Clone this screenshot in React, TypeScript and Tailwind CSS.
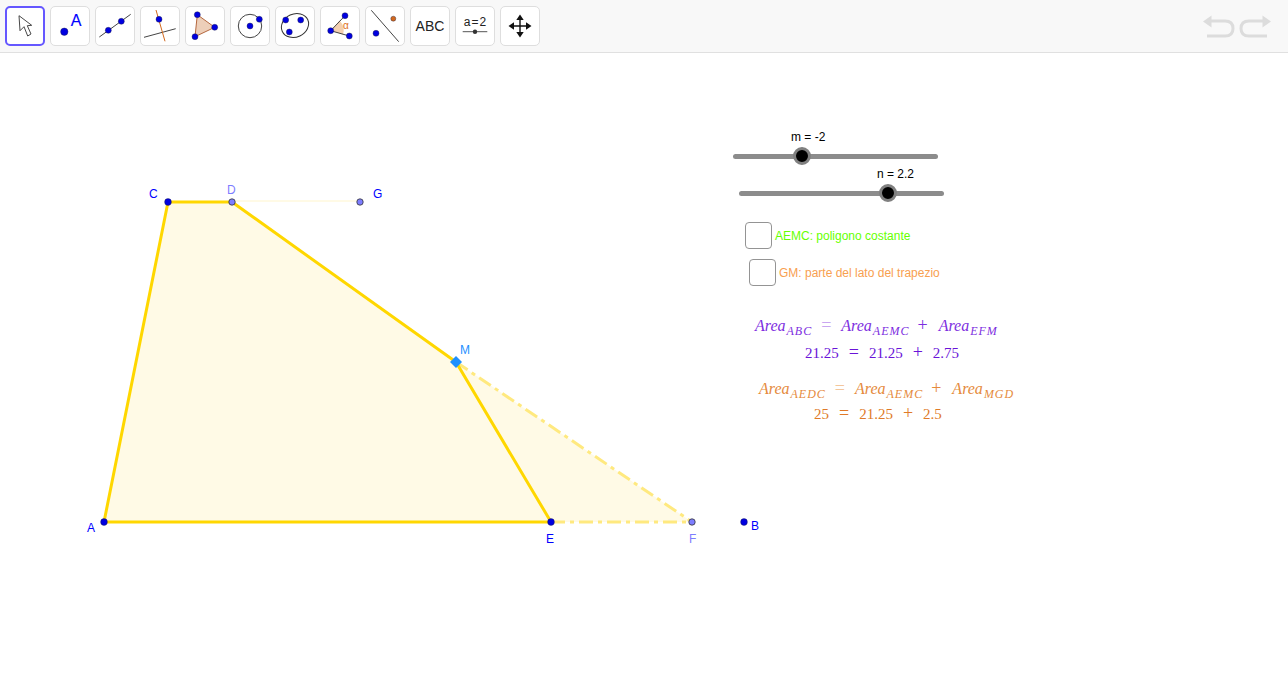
import type { ReactNode } from 'react';

const BLUE = '#0000e0';

function Dot({ x, y, r = 3, fill = BLUE }: { x: number; y: number; r?: number; fill?: string }) {
  return <circle cx={x} cy={y} r={r} fill={fill} stroke="#1c1c3c" strokeWidth={0.4} />;
}

function ToolIcon({ children }: { children: ReactNode }) {
  return (
    <svg width="40" height="40" viewBox="0 0 40 40" className="block" aria-hidden="true">
      {children}
    </svg>
  );
}

const TOOLS: ReactNode[] = [
  <path key="move" d="M14 9.7 15 24.7 19 20.7 22.7 30 26 28 22.3 19.7 26.7 19.3Z" fill="#fff" stroke="#333" strokeWidth={0.9} strokeLinejoin="round" />,
  <g key="point">
    <Dot x={14.3} y={25.7} r={3.7} />
    <text x={26} y={19.5} textAnchor="middle" fontSize={16} fill="#0000ff" stroke="#0000ff" strokeWidth={0.15} fontFamily="Liberation Sans, sans-serif">A</text>
  </g>,
  <g key="line">
    <line x1={4.3} y1={31} x2={35.7} y2={8.3} stroke="#444" strokeWidth={1} />
    <Dot x={13.3} y={24.3} />
    <Dot x={26.3} y={15.3} />
  </g>,
  <g key="perp">
    <line x1={4} y1={31.3} x2={35.7} y2={22.7} stroke="#444" strokeWidth={1} />
    <line x1={16} y1={4} x2={25} y2={35.3} stroke="#d2691e" strokeWidth={1} />
    <Dot x={19} y={13.3} />
  </g>,
  <g key="polygon">
    <path d="M12.3 8.7 29.7 21.3 10 30.7Z" fill="#edcfb9" stroke="#b5683f" strokeWidth={1} />
    <Dot x={12.3} y={8.7} />
    <Dot x={29.7} y={21.3} />
    <Dot x={10} y={30.7} />
  </g>,
  <g key="circle">
    <circle cx={20} cy={20} r={11.7} fill="none" stroke="#444" strokeWidth={1} />
    <Dot x={20} y={20} />
    <Dot x={29.3} y={13.3} />
  </g>,
  <g key="conic">
    <ellipse cx={20} cy={19.5} rx={14} ry={11.5} transform="rotate(-25 20 19.5)" fill="none" stroke="#333" strokeWidth={1} />
    <Dot x={10.7} y={14} />
    <Dot x={25.7} y={14} />
    <Dot x={14.3} y={26} />
  </g>,
  <g key="angle">
    <path d="M10.7 24.7 19.5 14.5A14 14 0 0 1 23 28.4Z" fill="#f3cfb0" />
    <path d="M25 9.7 10.7 24.7 29.3 30" fill="none" stroke="#444" strokeWidth={1} />
    <text x={26} y={23} textAnchor="middle" fontSize={10} fill="#e07020" fontFamily="Liberation Sans, sans-serif">α</text>
    <Dot x={10.7} y={24.7} />
    <Dot x={25} y={9.7} />
    <Dot x={29.3} y={30} />
  </g>,
  <g key="reflect">
    <line x1={6.3} y1={4.3} x2={33.7} y2={35.7} stroke="#444" strokeWidth={1} />
    <Dot x={11} y={27.3} />
    <Dot x={28.3} y={12.7} r={2.5} fill="#d2691e" />
  </g>,
  <text key="abc" x={20} y={25} textAnchor="middle" fontSize={14} fill="#222" fontFamily="Liberation Sans, sans-serif">ABC</text>,
  <g key="slider">
    <text x={20.5} y={19.5} textAnchor="middle" fontSize={12} letterSpacing={1} fill="#222" fontFamily="Liberation Sans, sans-serif">a=2</text>
    <line x1={7.7} y1={25.7} x2={32.3} y2={25.7} stroke="#555" strokeWidth={1} />
    <circle cx={20} cy={25.7} r={2.2} fill="#333" />
  </g>,
  <g key="pan">
    <path d="M20 11V29M11 20H29" stroke="#111" strokeWidth={1.4} />
    <path d="M20 8.5 16.3 14H23.7ZM20 31.5 16.3 26H23.7ZM8.5 20 14 16.3V23.7ZM31.5 20 26 16.3V23.7Z" fill="#111" />
  </g>,
];

function Toolbar() {
  return (
    <div className="flex h-[53px] items-start justify-between border-b border-[#e0e0e0] bg-[#f8f8f8] pl-[5px] pr-[16px] pt-[6px]">
      <div className="flex gap-[5px]">
        {TOOLS.map((icon, i) => (
          <div
            key={i}
            className={
              i === 0
                ? 'size-[40px] rounded-[5px] border-2 border-[#6557ff] bg-white [&>svg]:-m-[2px]'
                : 'size-[40px] rounded-[5px] border border-[#dedede] bg-white [&>svg]:-m-px'
            }
          >
            <ToolIcon>{icon}</ToolIcon>
          </div>
        ))}
      </div>
      <div className="flex gap-[2px] pt-[6px]">
        <svg width="34" height="28" viewBox="0 0 34 28" aria-hidden="true">
          <path d="M8 9H23Q31 9 31 16.5T23 24H5" fill="none" stroke="#dcdcdc" strokeWidth={3} />
          <path d="M1 9.5 9.5 3.5V15.5Z" fill="#dcdcdc" />
        </svg>
        <svg width="34" height="28" viewBox="0 0 34 28" aria-hidden="true">
          <path d="M26 9H11Q3 9 3 16.5T11 24H29" fill="none" stroke="#dcdcdc" strokeWidth={3} />
          <path d="M33 9.5 24.5 3.5V15.5Z" fill="#dcdcdc" />
        </svg>
      </div>
    </div>
  );
}

function Figure() {
  return (
    <svg width="1288" height="677" viewBox="0 0 1288 677" className="absolute left-0 top-0" aria-hidden="true">
      <path d="M104 522H551L456 362 232 202H168Z" fill="#fffae6" />
      <path d="M456 362 551 522H692Z" fill="#fffae6" />
      <line x1={232} y1={201} x2={360} y2={201} stroke="#fff5cc" strokeWidth={1} />
      <path d="M551 522H692M456 362 692 522" fill="none" stroke="#ffe97f" strokeWidth={3} strokeDasharray="14 5 4 5" />
      <path d="M456 362 232 202H168L104 522H551Z" fill="none" stroke="#ffd700" strokeWidth={3} strokeLinejoin="round" />
      <Dot x={104} y={522} r={3.4} />
      <Dot x={168} y={202} r={3.4} />
      <Dot x={551} y={522} r={3.4} />
      <Dot x={744} y={522} r={3.4} />
      <circle cx={232} cy={202} r={3.2} fill="#7d7dff" stroke="#333" strokeWidth={0.8} />
      <circle cx={360} cy={202} r={3.2} fill="#7d7dff" stroke="#333" strokeWidth={0.8} />
      <circle cx={692} cy={522} r={3.2} fill="#7d7dff" stroke="#333" strokeWidth={0.8} />
      <path d="M456 356 462 362 456 368 450 362Z" fill="#1e90ff" />
    </svg>
  );
}

function Slider({ label, labelClass, trackClass, knobClass }: { label: string; labelClass: string; trackClass: string; knobClass: string }) {
  return (
    <>
      <span className={`absolute whitespace-nowrap text-[12px] leading-none text-black ${labelClass}`}>{label}</span>
      <div className={`absolute h-[5px] w-[205px] rounded-full bg-[#8c8c8c] ${trackClass}`} />
      <div className={`absolute size-[18px] rounded-full border-[3.5px] border-[#808080] bg-black ${knobClass}`} />
    </>
  );
}

function Check({ label, boxClass, labelClass }: { label: string; boxClass: string; labelClass: string }) {
  return (
    <>
      <div className={`absolute size-[27px] rounded-[4px] border-[1.5px] border-[#949494] bg-white ${boxClass}`} />
      <span className={`absolute whitespace-nowrap text-[12px] leading-none ${labelClass}`}>{label}</span>
    </>
  );
}

function Area({ sub }: { sub: string }) {
  return (
    <span className="whitespace-nowrap italic">
      Area
      <span className="relative top-[4px] ml-[1px] text-[12px] tracking-[1px]">{sub}</span>
    </span>
  );
}

function AreaRow({ className, eqClass, subs }: { className: string; eqClass: string; subs: [string, string, string] }) {
  return (
    <div className={`absolute flex items-baseline whitespace-nowrap font-['Liberation_Serif',serif] text-[16px] leading-none ${className}`}>
      <Area sub={subs[0]} />
      <span className={`ml-[9px] mr-[10px] text-[18px] ${eqClass}`}>=</span>
      <Area sub={subs[1]} />
      <span className="ml-[8px] mr-[11px] text-[18px]">+</span>
      <Area sub={subs[2]} />
    </div>
  );
}

function ValueRow({ className, values }: { className: string; values: [string, string, string] }) {
  return (
    <div className={`absolute flex items-baseline whitespace-nowrap font-['Liberation_Serif',serif] text-[15px] leading-none ${className}`}>
      {values[0]}
      <span className="mx-[10px] text-[18px]">=</span>
      {values[1]}
      <span className="mx-[10px] text-[18px]">+</span>
      {values[2]}
    </div>
  );
}

export default function App() {
  return (
    <div className="relative h-[677px] w-[1288px] overflow-hidden bg-white font-['Liberation_Sans',Arial,sans-serif]">
      <Toolbar />
      <Figure />

      <span className="absolute left-[149px] top-[188px] text-[12px] leading-none text-[#0000ff]">C</span>
      <span className="absolute left-[227px] top-[184px] text-[12px] leading-none text-[#7d7dff]">D</span>
      <span className="absolute left-[373px] top-[188px] text-[12px] leading-none text-[#0000ff]">G</span>
      <span className="absolute left-[460px] top-[344px] text-[12px] leading-none text-[#1e90ff]">M</span>
      <span className="absolute left-[87px] top-[522px] text-[12px] leading-none text-[#0000ff]">A</span>
      <span className="absolute left-[546px] top-[533px] text-[12px] leading-none text-[#0000ff]">E</span>
      <span className="absolute left-[689px] top-[533px] text-[12px] leading-none text-[#7d7dff]">F</span>
      <span className="absolute left-[751px] top-[520px] text-[12px] leading-none text-[#0000ff]">B</span>

      <Slider label="m = -2" labelClass="left-[791px] top-[131px]" trackClass="left-[733px] top-[154px]" knobClass="left-[793px] top-[147px]" />
      <Slider label="n = 2.2" labelClass="left-[877px] top-[168px]" trackClass="left-[739px] top-[191px]" knobClass="left-[879px] top-[184px]" />

      <Check label="AEMC: poligono costante" boxClass="left-[745px] top-[222px]" labelClass="left-[775px] top-[230px] text-[#66ff00]" />
      <Check label="GM: parte del lato del trapezio" boxClass="left-[749px] top-[259px]" labelClass="left-[779px] top-[267px] text-[#f8a050]" />

      <AreaRow className="left-[755px] top-[316px] text-[#7d2ee0]" eqClass="text-[#c9a6f0]" subs={['ABC', 'AEMC', 'EFM']} />
      <ValueRow className="left-[805px] top-[343px] text-[#6a14d8]" values={['21.25', '21.25', '2.75']} />
      <AreaRow className="left-[759px] top-[379px] text-[#e58a3c]" eqClass="text-[#f3c69c]" subs={['AEDC', 'AEMC', 'MGD']} />
      <ValueRow className="left-[814px] top-[404px] text-[#e07a28]" values={['25', '21.25', '2.5']} />
    </div>
  );
}
